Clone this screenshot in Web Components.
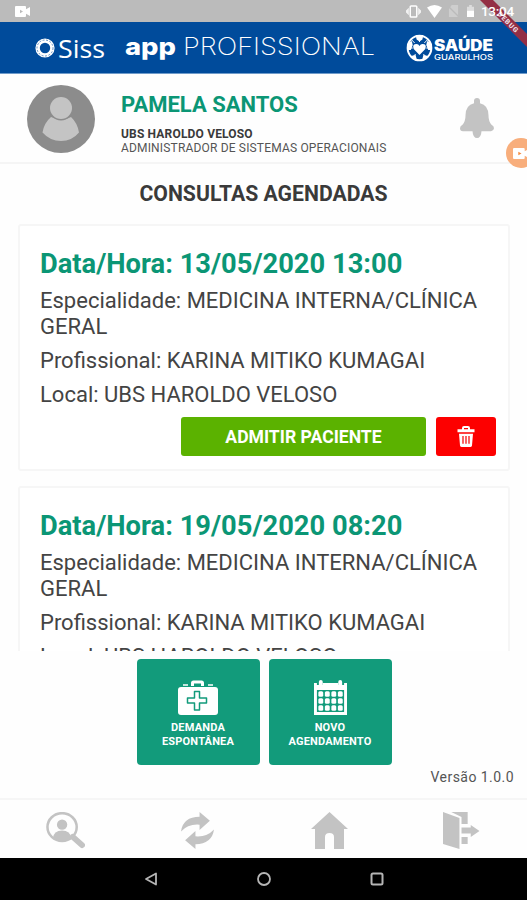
<!DOCTYPE html>
<html lang="pt-BR">
<head>
<meta charset="utf-8">
<title>Siss app Profissional</title>
<style>
  body {
    margin: 0;
    width: 527px;
    height: 900px;
    overflow: hidden;
    background: #fefefe;
    font-family: Roboto, "Liberation Sans", sans-serif;
    color: #3a3a3a;
  }
</style>
</head>
<body>
<siss-app></siss-app>

<script>
const icons = {
  camera: ["0 0 16 12", `<path d="M1 0h9q1 0 1 1v2.600L15 1v10l-4-2.600V11q0 1-1 1H1q-1 0-1-1V1q0-1 1-1z"/><path d="M5 4v4l3-2z" fill="var(--hole, #bbb)"/>`],
  vibrate: ["0 0 16 14", `<rect x="4.500" y="1" width="7" height="12" rx="1" fill="none" stroke="currentColor" stroke-width="1.600"/><path d="M3 3v8L0 8V6zM13 3v8l3-3V6z" opacity=".8"/>`],
  wifi: ["0 0 16 13", `<path d="M0 2.500Q8-2.500 16 2.500L8 13z"/>`],
  nosim: ["0 0 12 12", `<path d="M4 0h7v12H1V4z" opacity=".28"/><path d="M0 1l12 11" stroke="#bbb" stroke-width="1.500"/>`],
  battery: ["0 0 8 13", `<path d="M2.500 0h3v2H8v4H0V2h2.500z" opacity=".5"/><path d="M0 6h8v7H0z"/>`],
  avatar: ["0 0 68 68", `<circle cx="34" cy="34" r="34" fill="#8c8c8c"/><path d="M24 32q-7 6-8.500 15.500Q23 56 34 56t18-8.500Q50.500 38 44 32q-9 5-20 0z" fill="#c4c4c4"/><circle cx="34" cy="23" r="12.500" fill="#8c8c8c"/><circle cx="34" cy="23" r="11" fill="#c4c4c4"/>`],
  bell: ["0 0 34 42", `<path d="M17 0q3 0 3 3v2.500q8.500 2 8.500 12.500 0 6 3 9.500Q34 29 34 31t-3 3H21.500q-.500 7-4.500 7t-4.500-7H3q-3 0-3-3 0-2 2.500-3.500 3-3.500 3-9.500 0-10.500 8.500-12.500V3q0-3 3-3z"/>`],
  trash: ["0 0 18 22", `<path d="M5 3.500V2q0-2 2-2h4q2 0 2 2v1.500h4.500v3H.500v-3zm2 0h4V2H7zM2 8h14l-1 12.500q0 1.500-1.500 1.500h-9Q3 22 3 20.500z"/><path d="M6 10.500v8M9 10.500v8M12 10.500v8" stroke="#f50000" stroke-width="1.200"/>`],
  medkit: ["0 0 40 35", `<path d="M5 5h5M30 5h5" stroke="currentColor" stroke-width="1.300"/><path d="M13 6V3q0-2.500 2.500-2.500h8Q26 .500 26 3v3h-3V3.500h-7V6z"/><rect y="7" width="40" height="28" rx="3"/><path d="M16.500 11.500h5v6.500h7v5h-7v7h-5v-7h-7v-5h7z" fill="none" stroke="#129b7b" stroke-width="1.500" stroke-linejoin="round"/>`],
  calendar: ["0 0 34 35", `<path d="M0 3h34v32H0z"/><path d="M3 10h28v22H3z" fill="#129b7b"/><path d="M3 3h6M25 3h6" stroke="#129b7b" stroke-width="4"/><rect x="5" width="4" height="7" rx="2"/><rect x="25" width="4" height="7" rx="2"/>` +
    [0, 1, 2].map(r => [0, 1, 2, 3].map(c => `<rect x="${4.5 + c * 6.7}" y="${11.3 + r * 7}" width="5" height="5.400" rx="1.500"/>`).join("")).join("")],
  search: ["0 0 40 38", `<ellipse cx="16.500" cy="15.500" rx="15" ry="14.300" fill="none" stroke="currentColor" stroke-width="2.600"/><circle cx="16.500" cy="13" r="5.300"/><path d="M7 27q1-8 9.500-8t9.500 8q-8 5-19 0z"/><path d="M27.500 25.500L37 34" stroke="currentColor" stroke-width="6" stroke-linecap="round"/>`],
  sync: ["0 0 32 38", `<path d="M0 20Q2 5 18 5V0l10 9-10 9.500V13Q7 12 0 20z"/><path d="M32 18Q30 33 14 33v5L4 29l10-9.500V25q11 1 18-7z"/>`],
  home: ["0 0 37 37", `<path d="M18.500 0L37 17h-4v20H23V25q0-4-4.500-4T14 25v12H4V17H0z"/>`],
  exit: ["0 0 36 37", `<path d="M0 0l16 6v31L0 32z"/><path d="M8 0h16v12h-6V5z"/><path d="M18 15.500h9V13l8.500 6-8.500 6v-3.500h-9zM18 25h6v7h-6z"/>`],
  gear: ["0 0 20 20", `<circle cx="10" cy="10" r="7.400" fill="none" stroke="currentColor" stroke-width="4.400"/><circle cx="10" cy="10" r="8" fill="none" stroke="#004b9b" stroke-width=".6" stroke-dasharray="2 1.500"/>`],
  heart: ["0 0 28 28", `<circle cx="14" cy="14" r="12.300" fill="none" stroke="currentColor" stroke-width="2"/><path d="M14 1v7M1.500 14H7M21 14h5.500M6 24l4-4M22 24l-4-4M5 5l4 4M23 5l-4 4" stroke="currentColor" stroke-width="1"/><path d="M10 1h8l-1 4.500-3 2-3-2zM1 10l5-3 1 4-2 5H1zM27 10l-5-3-1 4 2 5h4zM5 22l5-1 1 4-1 2zM23 22l-5-1-1 4 1 2z"/><path d="M14 21l-6-6q-2-5 3-5 2 0 3 2 1-2 3-2 5 0 3 5z"/>`],
  back: ["0 0 14 14", `<path d="M12 1.500v11L2 7z" fill="none" stroke="currentColor" stroke-width="1.800" stroke-linejoin="round"/>`],
  circle: ["0 0 14 14", `<circle cx="7" cy="7" r="6" fill="none" stroke="currentColor" stroke-width="1.800"/>`],
  square: ["0 0 14 14", `<rect x="1.500" y="1.500" width="11" height="11" rx="1.500" fill="none" stroke="currentColor" stroke-width="2"/>`],
};

class BaseElement extends HTMLElement {
  constructor() {
    super();
    this.attachShadow({ mode: "open" });
  }

  connectedCallback() {
    this.shadowRoot.innerHTML = this.template();
  }
}

class SissIcon extends BaseElement {
  template() {
    const [box, shapes] = icons[this.getAttribute("name")];
    return `
      <style>
        :host { display: block; flex: none; }
        svg { display: block; width: 100%; height: 100%; fill: currentColor; }
      </style>
      <svg viewBox="${box}" preserveAspectRatio="none">${shapes}</svg>`;
  }
}

class StatusBar extends BaseElement {
  template() {
    return `
      <style>
        :host {
          display: flex;
          align-items: center;
          height: 22px;
          padding: 0 13px 0 15px;
          box-sizing: border-box;
          background: #bbb;
          color: #fff;
        }
        .camera { width: 16px; height: 11px; margin-right: auto; }
        .vibrate { width: 15px; height: 13px; margin-right: 6px; }
        .wifi { width: 15px; height: 13px; margin-right: 6px; }
        .nosim { width: 11px; height: 12px; margin-right: 8px; }
        .battery { width: 7px; height: 12px; margin-right: 7px; }
        .ribbon {
          position: absolute;
          top: 0;
          right: 0;
        }
        time {
          position: relative;
          width: 33px;
          font-size: 13.500px;
          font-weight: 500;
          letter-spacing: -0.3px;
          white-space: nowrap;
        }
      </style>
      <siss-icon class="camera" name="camera"></siss-icon>
      <siss-icon class="vibrate" name="vibrate"></siss-icon>
      <siss-icon class="wifi" name="wifi"></siss-icon>
      <siss-icon class="nosim" name="nosim"></siss-icon>
      <siss-icon class="battery" name="battery"></siss-icon>
      <svg class="ribbon" width="60" height="60">
        <path d="M13 0h13l34 34v13z" fill="#932f45"/>
        <text transform="translate(41 22) rotate(45)" y="2.500" text-anchor="middle"
          font-size="7" font-weight="900" fill="#eadbe0" textLength="26">DEBUG</text>
      </svg>
      <time>13:04</time>`;
  }
}

class BrandBar extends BaseElement {
  template() {
    return `
      <style>
        :host {
          display: flex;
          align-items: center;
          height: 52px;
          padding: 0 34px 0 35px;
          box-sizing: border-box;
          background: #004b9b;
          border-bottom: 1px solid #6f9bca;
          color: #fff;
        }
        .gear { width: 20px; height: 20px; }
        .heart { width: 27px; height: 28px; }
        svg { display: block; flex: none; }
        .title { margin-right: auto; }
      </style>
      <siss-icon class="gear" name="gear"></siss-icon>
      <svg width="70" height="50" fill="#fff">
        <text x="3" y="34.500" font-family="'Open Sans'" font-weight="400" font-size="25" textLength="47" lengthAdjust="spacingAndGlyphs">Siss</text>
      </svg>
      <svg class="title" width="252" height="50" fill="#fff">
        <text x="0" y="32" font-family="Inter" font-weight="800" font-size="24" textLength="51" lengthAdjust="spacingAndGlyphs">app</text>
        <text x="58" y="32" font-family="Inter" font-weight="200" font-size="24.500" textLength="192" lengthAdjust="spacingAndGlyphs">PROFISSIONAL</text>
      </svg>
      <siss-icon class="heart" name="heart"></siss-icon>
      <svg width="60" height="50" fill="#fff">
        <text x="1" y="27.500" font-family="Inter" font-weight="900" font-size="15.500" textLength="59" lengthAdjust="spacingAndGlyphs">SAÚDE</text>
        <text x="1" y="36.500" font-family="Inter" font-weight="500" font-size="8" textLength="59" lengthAdjust="spacingAndGlyphs">GUARULHOS</text>
      </svg>`;
  }
}

class ProfileBar extends BaseElement {
  template() {
    return `
      <style>
        :host {
          display: flex;
          height: 90px;
          padding: 11px 33px 0 27px;
          box-sizing: border-box;
          background: #fefefe;
          border-bottom: 2px solid #f5f5f5;
        }
        .avatar { width: 68px; height: 68px; margin-right: 26px; }
        .info { flex: 1; white-space: nowrap; }
        .name {
          margin: 6px 0 8px;
          font-size: 22px;
          line-height: 28px;
          font-weight: 700;
          color: #0b9675;
        }
        .unit { font-size: 12px; line-height: 14px; font-weight: 700; letter-spacing: 0.17px; }
        .role { font-size: 12px; line-height: 14px; color: #555; letter-spacing: 0.17px; }
        .bell { width: 34px; height: 41px; margin-top: 13px; color: #c3c3c3; }
      </style>
      <siss-icon class="avatar" name="avatar"></siss-icon>
      <div class="info">
        <div class="name"><slot></slot></div>
        <div class="unit">${this.getAttribute("unit")}</div>
        <div class="role">${this.getAttribute("role-name")}</div>
      </div>
      <siss-icon class="bell" name="bell"></siss-icon>`;
  }
}

class AppointmentCard extends BaseElement {
  template() {
    return `
      <style>
        :host {
          display: block;
          flex: none;
          height: 247px;
          padding: 23px 12px 0 20px;
          box-sizing: border-box;
          border: 2px solid #f6f6f6;
          border-radius: 3px;
          background: #fff;
        }
        h2 {
          margin: 0 0 8px;
          font-size: 27.300px;
          line-height: 31px;
          font-weight: 700;
          color: #0b9675;
        }
        ::slotted(p) {
          margin: 0 0 8px;
          font-size: 22px;
          line-height: 26px;
          color: #444;
        }
        .actions {
          display: flex;
          justify-content: flex-end;
          gap: 10px;
          padding-top: 1px;
        }
        button {
          display: grid;
          place-items: center;
          height: 39px;
          padding: 0;
          border: 0;
          border-radius: 3px;
          color: #fff;
          font: 700 17.600px Roboto, sans-serif;
        }
        .admit { width: 245px; background: #5bb200; }
        .remove { width: 60px; background: #fd0000; }
        .remove siss-icon { width: 18px; height: 21px; }
      </style>
      <h2>Data/Hora: ${this.getAttribute("when")}</h2>
      <slot></slot>
      <div class="actions">
        <button class="admit">ADMITIR PACIENTE</button>
        <button class="remove" aria-label="Excluir"><siss-icon name="trash"></siss-icon></button>
      </div>`;
  }
}

class ActionTile extends BaseElement {
  template() {
    return `
      <style>
        :host {
          display: flex;
          flex-direction: column;
          align-items: center;
          width: 123px;
          height: 106px;
          padding-top: 21px;
          box-sizing: border-box;
          border-radius: 4px;
          background: #129b7b;
          color: #fff;
          text-align: center;
          font-size: 11px;
          line-height: 13.500px;
          font-weight: 700;
          letter-spacing: 0.2px;
        }
        siss-icon { width: var(--icon-width); height: 35px; margin-bottom: 6px; }
      </style>
      <siss-icon name="${this.getAttribute("icon")}"></siss-icon>
      <slot></slot>`;
  }
}

class TabBar extends BaseElement {
  template() {
    return `
      <style>
        :host {
          display: grid;
          grid-template-columns: repeat(4, 1fr);
          justify-items: center;
          height: 60px;
          padding-top: 12px;
          box-sizing: border-box;
          border-top: 2px solid #f6f6f6;
          color: #c3c3c3;
        }
        siss-icon { width: 37px; height: 37px; }
        .search { width: 39px; }
        .sync { width: 33px; }
      </style>
      <siss-icon class="search" name="search"></siss-icon>
      <siss-icon class="sync" name="sync"></siss-icon>
      <siss-icon name="home"></siss-icon>
      <siss-icon name="exit"></siss-icon>`;
  }
}

class SystemNav extends BaseElement {
  template() {
    return `
      <style>
        :host {
          display: flex;
          align-items: center;
          justify-content: center;
          gap: 99px;
          height: 42px;
          background: #000;
          color: #b5b5b5;
        }
        siss-icon { width: 14px; height: 14px; }
      </style>
      <siss-icon name="back"></siss-icon>
      <siss-icon name="circle"></siss-icon>
      <siss-icon name="square"></siss-icon>`;
  }
}

class SissApp extends BaseElement {
  template() {
    return `
      <style>
        :host {
          display: flex;
          flex-direction: column;
          position: relative;
          width: 527px;
          height: 900px;
          overflow: hidden;
        }
        h1 {
          margin: 0;
          height: 60px;
          font-size: 21.200px;
          line-height: 60px;
          font-weight: 700;
          text-align: center;
        }
        .list {
          display: flex;
          flex-direction: column;
          gap: 15px;
          height: 427px;
          padding: 0 17px 0 18px;
          overflow: hidden;
        }
        .tiles {
          display: flex;
          justify-content: center;
          gap: 9px;
          padding: 8px 0 0 1px;
        }
        .version {
          height: 33px;
          padding-right: 13px;
          font-size: 14px;
          line-height: 25px;
          letter-spacing: 0.45px;
          text-align: right;
          color: #555;
        }
        /* screen recorder bubble floating over the app */
        .recorder {
          position: absolute;
          top: 138px;
          right: -9px;
          display: grid;
          place-items: center;
          width: 30px;
          height: 30px;
          border-radius: 50%;
          background: #f8ae7c;
          color: #fff;
          --hole: #f58a3c;
        }
        .recorder siss-icon { width: 17px; height: 11px; }
      </style>
      <status-bar></status-bar>
      <brand-bar></brand-bar>
      <profile-bar unit="UBS HAROLDO VELOSO" role-name="ADMINISTRADOR DE SISTEMAS OPERACIONAIS">PAMELA SANTOS</profile-bar>
      <h1>CONSULTAS AGENDADAS</h1>
      <div class="list">
        ${["13/05/2020 13:00", "19/05/2020 08:20"].map(when => `
          <appointment-card when="${when}">
            <p>Especialidade: MEDICINA INTERNA/CLÍNICA GERAL</p>
            <p>Profissional: KARINA MITIKO KUMAGAI</p>
            <p>Local: UBS HAROLDO VELOSO</p>
          </appointment-card>`).join("")}
      </div>
      <div class="tiles">
        <action-tile icon="medkit" style="--icon-width: 40px"><span>DEMANDA<br>ESPONTÂNEA</span></action-tile>
        <action-tile icon="calendar" style="--icon-width: 33px"><span>NOVO<br>AGENDAMENTO</span></action-tile>
      </div>
      <div class="version">Versão 1.0.0</div>
      <tab-bar></tab-bar>
      <system-nav></system-nav>
      <div class="recorder"><siss-icon name="camera"></siss-icon></div>`;
  }
}

customElements.define("siss-icon", SissIcon);
customElements.define("status-bar", StatusBar);
customElements.define("brand-bar", BrandBar);
customElements.define("profile-bar", ProfileBar);
customElements.define("appointment-card", AppointmentCard);
customElements.define("action-tile", ActionTile);
customElements.define("tab-bar", TabBar);
customElements.define("system-nav", SystemNav);
customElements.define("siss-app", SissApp);
</script>
</body>
</html>
